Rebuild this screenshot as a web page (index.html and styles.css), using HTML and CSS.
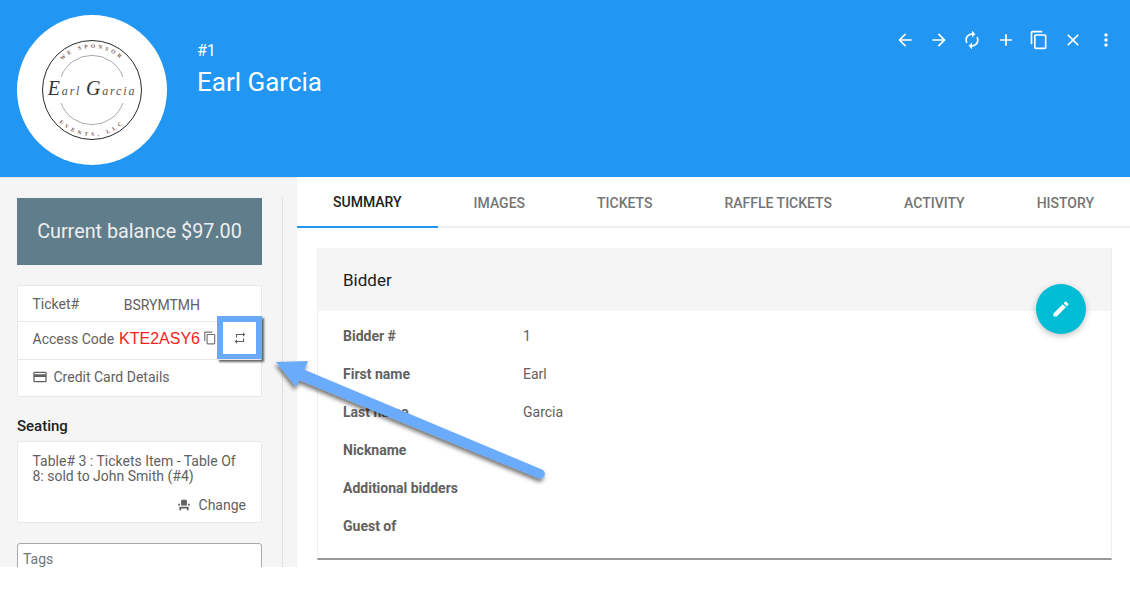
FILE: index.html
```html
<!DOCTYPE html>
<html lang="en">
<head>
<meta charset="utf-8">
<title>Earl Garcia</title>
<link rel="stylesheet" href="styles.css">
</head>
<body>
<div class="page">
  <header class="top">
    <div class="avatar">
      <svg class="logo" viewBox="0 0 110 110" width="110" height="110">
        <defs>
          <path id="ringTop" d="M 13 55 A 42 42 0 0 1 97 55"/>
          <path id="ringBot" d="M 9 55 A 46 46 0 0 0 101 55"/>
        </defs>
        <circle cx="55" cy="55" r="49.500" fill="none" stroke="#111" stroke-width="0.9"/>
        <path d="M 24 42 A 33 33 0 0 1 86 42" fill="none" stroke="#555" stroke-width="0.5"/>
        <path d="M 24 68 A 33 33 0 0 0 86 68" fill="none" stroke="#555" stroke-width="0.5"/>
        <text class="ring"><textPath href="#ringTop" startOffset="50%" text-anchor="middle">WE SPONSOR</textPath></text>
        <text class="ring ring-b"><textPath href="#ringBot" startOffset="50%" text-anchor="middle">EVENTS, LLC</textPath></text>
        <text class="script" x="55" y="60" text-anchor="middle"><tspan class="cap">E</tspan>arl <tspan class="cap">G</tspan>arcia</text>
      </svg>
    </div>
    <div class="title">
      <div class="num">#1</div>
      <div class="name">Earl Garcia</div>
    </div>
    <nav class="actions">
      <svg class="ico" viewBox="0 0 24 24"><path d="M20 11H7.83l5.59-5.59L12 4l-8 8 8 8 1.41-1.41L7.83 13H20v-2z"/></svg>
      <svg class="ico" viewBox="0 0 24 24"><path d="M12 4l-1.41 1.41L16.17 11H4v2h12.17l-5.58 5.59L12 20l8-8z"/></svg>
      <svg class="ico" viewBox="0 0 24 24"><path d="M12 6v3l4-4-4-4v3c-4.42 0-8 3.58-8 8 0 1.57.46 3.03 1.24 4.26L6.7 14.8c-.45-.83-.7-1.79-.7-2.8 0-3.31 2.69-6 6-6zm6.76 1.74L17.3 9.2c.44.84.7 1.79.7 2.8 0 3.31-2.69 6-6 6v-3l-4 4 4 4v-3c4.42 0 8-3.58 8-8 0-1.57-.46-3.03-1.24-4.26z"/></svg>
      <svg class="ico" viewBox="0 0 24 24"><path d="M19 13h-6v6h-2v-6H5v-2h6V5h2v6h6v2z"/></svg>
      <svg class="ico" viewBox="0 0 24 24"><path d="M16 1H4c-1.1 0-2 .9-2 2v14h2V3h12V1zm3 4H8c-1.1 0-2 .9-2 2v14c0 1.1.9 2 2 2h11c1.1 0 2-.9 2-2V7c0-1.1-.9-2-2-2zm0 16H8V7h11v14z"/></svg>
      <svg class="ico" viewBox="0 0 24 24"><path d="M19 6.41L17.59 5 12 10.59 6.41 5 5 6.41 10.59 12 5 17.59 6.41 19 12 13.41 17.59 19 19 17.59 13.41 12z"/></svg>
      <svg class="ico" viewBox="0 0 24 24"><path d="M12 8c1.1 0 2-.9 2-2s-.9-2-2-2-2 .9-2 2 .9 2 2 2zm0 2c-1.1 0-2 .9-2 2s.9 2 2 2 2-.9 2-2-.9-2-2-2zm0 6c-1.1 0-2 .9-2 2s.9 2 2 2 2-.9 2-2-.9-2-2-2z"/></svg>
    </nav>
  </header>

  <div class="body">
    <aside class="side">
      <div class="col">
        <div class="balance">Current balance $97.00</div>
        <div class="box info">
          <div class="row row-ticket"><span>Ticket#</span><span class="ticket">BSRYMTMH</span></div>
          <div class="row row-code">
            <span>Access Code</span>
            <span class="code">KTE2ASY6</span>
            <svg class="ico-sm" viewBox="0 0 24 24"><path d="M16 1H4c-1.1 0-2 .9-2 2v14h2V3h12V1zm3 4H8c-1.1 0-2 .9-2 2v14c0 1.1.9 2 2 2h11c1.1 0 2-.9 2-2V7c0-1.1-.9-2-2-2zm0 16H8V7h11v14z"/></svg>
            <div class="hilite">
              <svg class="ico-rep" viewBox="0 0 24 24"><path d="M7 7h10v3l4-4-4-4v3H5v6h2V7zm10 10H7v-3l-4 4 4 4v-3h12v-6h-2v4z"/></svg>
            </div>
          </div>
          <div class="row row-card">
            <svg class="ico-card" viewBox="0 0 24 24"><path d="M20 4H4c-1.11 0-1.99.89-1.99 2L2 18c0 1.11.89 2 2 2h16c1.11 0 2-.89 2-2V6c0-1.11-.89-2-2-2zm0 14H4v-6h16v6zm0-10H4V6h16v2z"/></svg>
            <span>Credit Card Details</span>
          </div>
        </div>
        <h3 class="seat-h">Seating</h3>
        <div class="box seat">
          <p class="seat-t">Table# 3 : Tickets Item - Table Of 8: sold to John Smith (#4)</p>
          <div class="change">
            <svg class="ico-seat" viewBox="0 0 24 24"><path d="M4 18v3h3v-3h10v3h3v-6H4zm15-8h3v3h-3zM2 10h3v3H2zm15 3H7V5c0-1.1.9-2 2-2h6c1.1 0 2 .9 2 2v8z"/></svg>
            <span>Change</span>
          </div>
        </div>
        <div class="tags">Tags</div>
      </div>
      <div class="rule"></div>
    </aside>

    <main class="main">
      <div class="tabs">
        <span class="tab on">SUMMARY</span>
        <span class="tab">IMAGES</span>
        <span class="tab">TICKETS</span>
        <span class="tab">RAFFLE TICKETS</span>
        <span class="tab">ACTIVITY</span>
        <span class="tab">HISTORY</span>
      </div>
      <section class="card">
        <div class="card-h">Bidder</div>
        <button class="fab" type="button" aria-label="Edit">
          <svg viewBox="0 0 24 24" width="20" height="20"><path d="M3 17.25V21h3.75L17.81 9.94l-3.75-3.75L3 17.25zM20.71 7.04c.39-.39.39-1.02 0-1.41l-2.34-2.34c-.39-.39-1.02-.39-1.41 0l-1.83 1.83 3.75 3.75 1.83-1.83z"/></svg>
        </button>
        <dl class="fields">
          <div class="f"><dt>Bidder #</dt><dd>1</dd></div>
          <div class="f"><dt>First name</dt><dd>Earl</dd></div>
          <div class="f"><dt>Last name</dt><dd>Garcia</dd></div>
          <div class="f"><dt>Nickname</dt><dd></dd></div>
          <div class="f"><dt>Additional bidders</dt><dd></dd></div>
          <div class="f"><dt>Guest of</dt><dd></dd></div>
        </dl>
      </section>
    </main>
  </div>

  <svg class="arrow" viewBox="0 0 1130 595" width="1130" height="595">
    <defs>
      <filter id="sh" x="-10%" y="-20%" width="120%" height="140%">
        <feDropShadow dx="-1" dy="3" stdDeviation="2" flood-color="#000" flood-opacity="0.55"/>
      </filter>
    </defs>
    <path filter="url(#sh)" fill="#6aabfb" d="M276 362 L308 361 L304.500 369.800 L542.500 469.800 Q546 472 544.500 475.500 Q542.500 479.500 539 478.500 L299.500 380.200 L296 387 Z"/>
  </svg>
</div>
</body>
</html>
```
FILE: styles.css
```css
* { box-sizing: border-box; }
html, body { margin: 0; padding: 0; background: #fff; }
body { font-family: Roboto, "Liberation Sans", sans-serif; color: #616161; }
.page { position: relative; width: 1130px; height: 595px; overflow: hidden; }

.top { height: 177px; background: #2196f3; display: flex; padding: 15px 14px 0 17px; color: #fff; }
.avatar { width: 150px; height: 150px; border-radius: 50%; background: #fff; display: flex; align-items: center; justify-content: center; flex: none; }
.logo { display: block; }
.ring { font: bold 5.500px "Liberation Serif", serif; letter-spacing: 3px; fill: #7d5a50; }
.ring-b { letter-spacing: 3.400px; }
.script { font: italic 12px "Liberation Serif", serif; fill: #555; letter-spacing: 1.800px; }
.cap { font-size: 20px; fill: #333; }
.title { margin-left: 30px; padding-top: 26px; }
.num { font-size: 16px; line-height: 19px; }
.name { font-size: 26px; line-height: 30px; margin-top: 7px; }
.actions { margin-left: auto; display: flex; gap: 13.500px; padding-top: 15px; height: 35px; }
.ico { width: 20px; height: 20px; fill: #fff; display: block; }

.body { display: flex; align-items: flex-start; }
.side { width: 297px; height: 390px; background: #f5f5f5; display: flex; flex: none; overflow: hidden; padding: 21px 0 0 17px; box-shadow: inset 0 2px 1px -1px #e4e4e4; }
.col { width: 245px; flex: none; }
.rule { width: 1px; height: 400px; background: #e0e0e0; margin-left: 20px; }
.balance { height: 67px; background: #607d8b; color: #eceff1; font-size: 19.800px; display: flex; align-items: center; justify-content: center; }
.box { background: #fff; border: 1px solid #e8e8e8; border-radius: 2px; }
.info { margin-top: 20px; height: 112px; font-size: 14px; }
.row { display: flex; align-items: center; padding-left: 14.500px; border-top: 1px solid #e8e8e8; height: 38px; position: relative; }
.row-ticket { border-top: 0; height: 35px; }
.row-code, .row-card { padding-bottom: 3px; }
.ticket { margin-left: 44.500px; position: relative; top: 1px; }
.code { font: 16px "Liberation Sans", sans-serif; color: #f5221b; margin-left: 5px; }
.ico-sm { width: 14px; height: 14px; fill: #757575; margin-left: 3px; position: relative; top: -1px; }
.hilite { position: absolute; left: 199px; top: -6px; width: 45px; height: 44px; background: #fff; border: 6px solid #6aa9f8; box-shadow: 2px 2px 2px rgba(0,0,0,.6); display: flex; align-items: center; justify-content: center; }
.ico-rep { width: 14px; height: 14px; fill: #616161; display: block; }
.ico-card { width: 16px; height: 16px; fill: #616161; margin-right: 6px; margin-left: -1px; }
.seat-h { margin: 20px 0 0; font-size: 15px; font-weight: 500; color: #212121; line-height: 18px; }
.seat { margin-top: 6px; height: 82px; padding: 12px 15px 0 14.500px; font-size: 14px; }
.seat-t { margin: 0; line-height: 15px; }
.change { display: flex; justify-content: flex-end; align-items: center; margin-top: 13px; }
.ico-seat { width: 14px; height: 14px; fill: #616161; margin-right: 8px; }
.tags { margin-top: 20px; height: 50px; background: #fff; border: 1px solid #a8a8a8; border-radius: 3px; padding: 7px 5px; font-size: 14px; color: #757575; }

.main { flex: 1; min-width: 0; background: #fff; }
.tabs { display: flex; height: 51px; border-bottom: 2px solid #eee; font-size: 14px; font-weight: 500; color: #757575; white-space: nowrap; }
.tab { padding: 0 36px; display: flex; align-items: center; height: 51px; }
.tab.on { color: #212121; border-bottom: 2px solid #2196f3; }
.card { position: relative; margin: 20px 18px 0 20px; height: 312px; border: 1px solid #eee; border-top: 0; border-bottom: 2px solid #999; background: #fff; }
.card-h { height: 63px; background: #f5f5f5; color: #212121; font-size: 17px; display: flex; align-items: center; padding-left: 25px; }
.fab { position: absolute; right: 25px; top: 36px; width: 50px; height: 50px; border-radius: 50%; border: 0; padding: 0; background: #00bcd4; display: flex; align-items: center; justify-content: center; box-shadow: 0 2px 6px rgba(0,0,0,.25); }
.fab svg { fill: #fff; display: block; }
.fields { margin: 6px 0 0; padding: 0 0 0 25px; font-size: 14px; }
.f { display: flex; height: 38px; align-items: center; }
.f dt { width: 180px; font-weight: 700; color: #616161; }
.f dd { margin: 0; }

.arrow { position: absolute; left: 0; top: 0; pointer-events: none; }
```
